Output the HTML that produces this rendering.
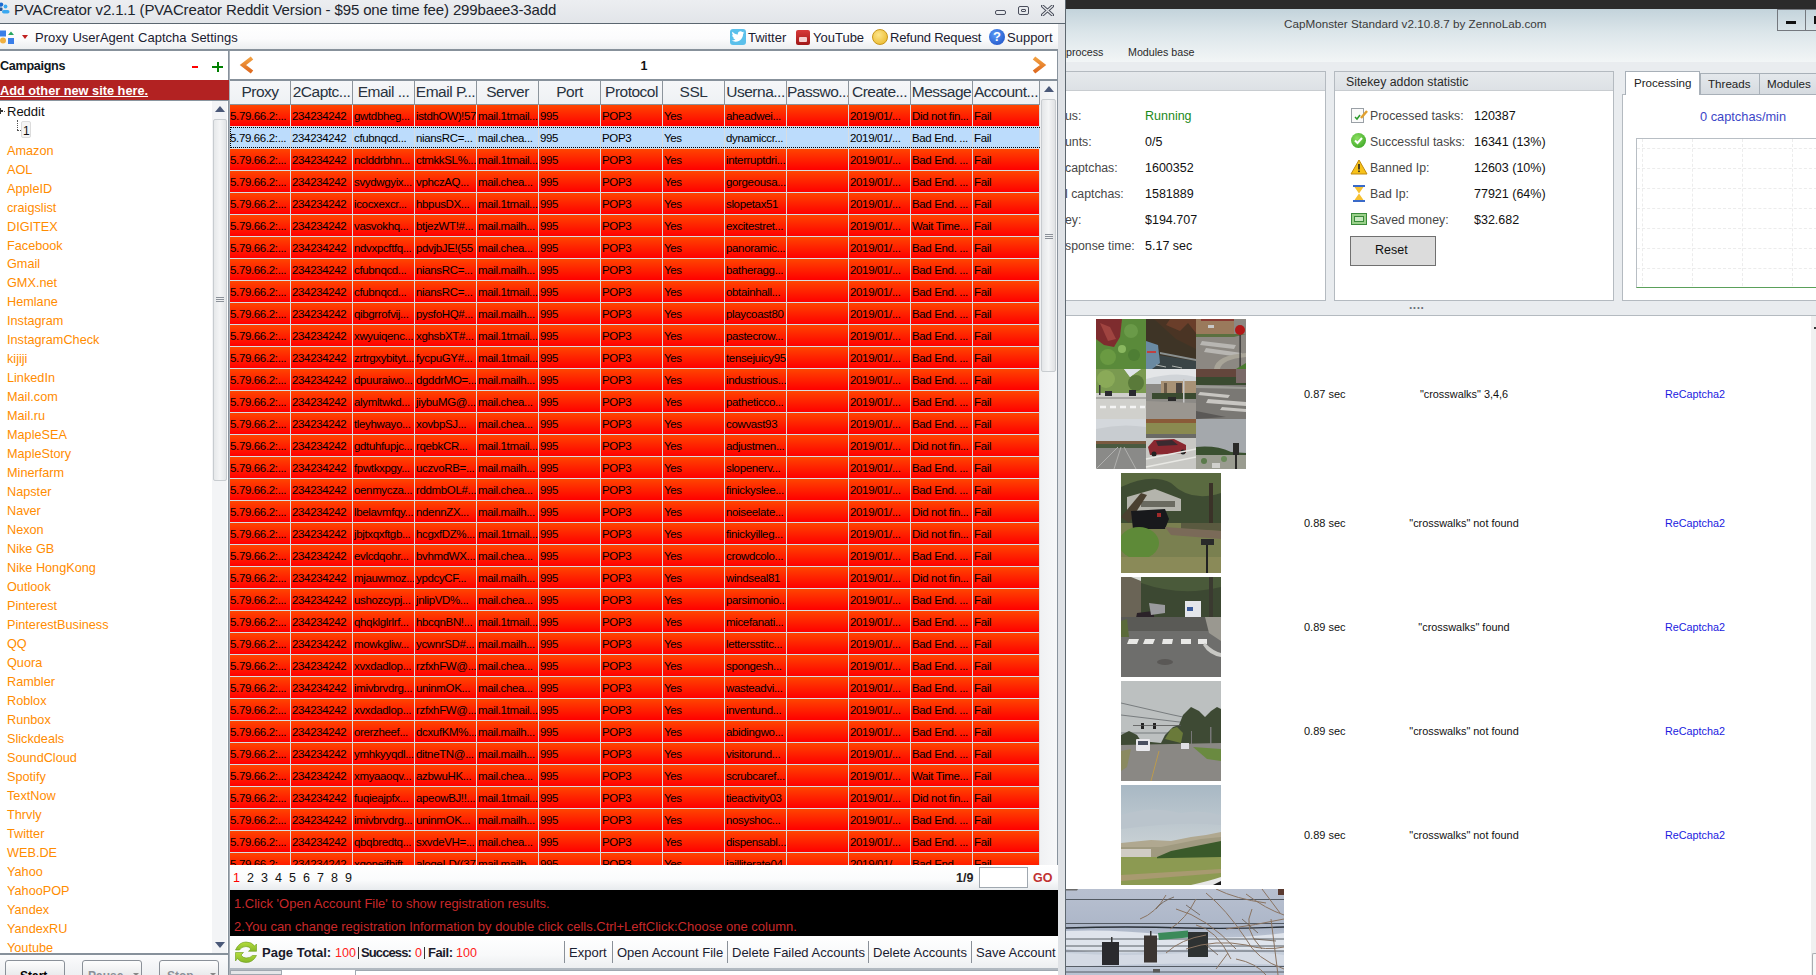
<!DOCTYPE html><html><head><meta charset="utf-8"><style>
*{margin:0;padding:0;box-sizing:border-box}
html,body{width:1816px;height:975px;overflow:hidden;background:#fff;font-family:"Liberation Sans",sans-serif;color:#000}
.a{position:absolute}
.t{position:absolute;white-space:pre;line-height:1}
#lw{position:absolute;left:0;top:0;width:1066px;height:975px;overflow:hidden;background:#fff}
#rw{position:absolute;left:1066px;top:0;width:750px;height:975px;overflow:hidden;background:#fff}
.row{position:absolute;left:230px;width:810px;height:21px;background:linear-gradient(#ff4500,#ff0000)}
.cell{position:absolute;top:0;height:21px;font-size:11.5px;line-height:22px;white-space:pre;overflow:hidden;color:#000;letter-spacing:-0.35px}
.vl{position:absolute;width:1px;background:#d8dce0}
.hd{position:absolute;top:0;height:23px;font-size:15.5px;line-height:22px;text-align:center;color:#28323e;white-space:pre;overflow:hidden;letter-spacing:-0.5px}
.camp{position:absolute;left:7px;font-size:12.7px;color:#ff8c00;white-space:pre;line-height:1}
.lbl{position:absolute;font-size:12.3px;color:#474747;white-space:pre;line-height:1}
.val{position:absolute;font-size:12.5px;color:#111;white-space:pre;line-height:1}
</style></head><body>
<div id="lw">
<div class="a" style="left:0;top:0;width:1066px;height:23px;background:linear-gradient(#eceef1,#e2e5e9)"></div>
<div class="a" style="left:0;top:23px;width:1066px;height:1px;background:#5b6670"></div>
<svg class="a" style="left:0;top:2px" width="12" height="12" viewBox="0 0 12 12"><circle cx="1.2" cy="2.6" r="2.1" fill="#1a6ad0"/><rect x="-1" y="5.5" width="3.5" height="3.5" rx="1" fill="#2a5a9a"/><circle cx="5.5" cy="4.5" r="1.9" fill="#3aa8f0"/><rect x="2" y="8" width="7.5" height="3.6" rx="1.8" fill="#3aa8f0"/></svg>
<div class="t" style="left:14px;top:2px;font-size:15px;letter-spacing:-0.14px;color:#20242c">PVACreator v2.1.1 (PVACreator Reddit Version - $95 one time fee) 299baee3-3add</div>
<div class="a" style="left:995px;top:10px;width:11px;height:5px;border:1.6px solid #4a4e5c;border-radius:2px"></div>
<div class="a" style="left:1018px;top:6px;width:11px;height:9px;border:1.6px solid #4a4e5c;border-radius:2px"></div>
<div class="a" style="left:1021px;top:9px;width:5px;height:3px;border:1.3px solid #4a4e5c;border-radius:1px"></div>
<svg class="a" style="left:1041px;top:5px" width="13" height="11" viewBox="0 0 13 11"><path d="M1.5 1 L11.5 10 M11.5 1 L1.5 10" stroke="#4a4e5c" stroke-width="3.2" stroke-linecap="round"/><path d="M1.5 1 L11.5 10 M11.5 1 L1.5 10" stroke="#e8eaed" stroke-width="1.2" stroke-linecap="round"/></svg>
<div class="a" style="left:0;top:24px;width:1058px;height:25px;background:linear-gradient(#ffffff 0%,#fbfbfc 60%,#eceef0 100%)"></div>
<div class="a" style="left:0;top:49px;width:1058px;height:2px;background:#87919b"></div>
<svg class="a" style="left:0;top:29px" width="15" height="16" viewBox="0 0 15 16"><rect x="0" y="1.5" width="6" height="6" fill="#3a7ee8"/><path d="M8 6 L11 2.5 L14 6 Z" fill="#27a560"/><circle cx="3" cy="11.5" r="3" fill="#f0b040"/><rect x="8" y="9" width="6" height="6" fill="#3a7ee8"/></svg>
<svg class="a" style="left:22px;top:35px" width="6" height="4" viewBox="0 0 6 4"><path d="M0 0 H6 L3 4 Z" fill="#c02020"/></svg>
<div class="t" style="left:35px;top:31px;font-size:13px;color:#1a2030;word-spacing:0.6px">Proxy UserAgent Captcha Settings</div>
<div class="a" style="left:730px;top:29px;width:16px;height:16px;border-radius:3px;background:#5bc0eb"></div>
<svg class="a" style="left:731px;top:31px" width="14" height="12" viewBox="0 0 24 20"><path d="M23 2.3c-.8.4-1.7.6-2.6.7.9-.6 1.6-1.4 2-2.5-.9.5-1.8.9-2.9 1.1C18.6.7 17.4.2 16.2.2c-2.5 0-4.5 2-4.5 4.5 0 .4 0 .7.1 1C8 5.5 4.7 3.7 2.5 1 2.1 1.7 1.9 2.4 1.9 3.2c0 1.6.8 2.9 2 3.8-.7 0-1.4-.2-2-.6v.1c0 2.2 1.6 4 3.6 4.4-.4.1-.8.2-1.2.2-.3 0-.6 0-.8-.1.6 1.8 2.2 3.1 4.2 3.1-1.5 1.2-3.5 1.9-5.6 1.9H1c2 1.3 4.4 2 6.9 2 8.3 0 12.8-6.9 12.8-12.8v-.6c.9-.6 1.6-1.4 2.3-2.3z" fill="#fff"/></svg>
<div class="t" style="left:748px;top:31px;font-size:13px;color:#1a2030">Twitter</div>
<div class="a" style="left:796px;top:30px;width:14px;height:15px;border-radius:2px;background:linear-gradient(#d83a3a,#a01818)"></div>
<div class="a" style="left:799px;top:37px;width:8px;height:5px;border-radius:1px;background:#f4d0d0"></div>
<div class="t" style="left:813px;top:31px;font-size:13px;color:#1a2030">YouTube</div>
<div class="a" style="left:872px;top:29px;width:16px;height:16px;border-radius:8px;background:radial-gradient(circle at 40% 35%,#fde58a,#e8b420);border:1px solid #c8961a"></div>
<div class="t" style="left:890px;top:31px;font-size:13px;color:#1a2030;letter-spacing:-0.2px">Refund Request</div>
<div class="a" style="left:989px;top:29px;width:16px;height:16px;border-radius:8px;background:radial-gradient(circle at 40% 35%,#5a9cf8,#1848c0)"></div>
<div class="t" style="left:993px;top:30px;font-size:13px;font-weight:700;color:#fff">?</div>
<div class="t" style="left:1007px;top:31px;font-size:13px;color:#1a2030">Support</div>
<div class="a" style="left:1058px;top:24px;width:7px;height:951px;background:#dfe2e6"></div>
<div class="a" style="left:1057px;top:51px;width:1px;height:924px;background:#8a949e"></div>
<div class="a" style="left:1065px;top:0;width:1px;height:975px;background:#5e6870"></div>
<div class="t" style="left:0;top:60px;font-size:12.6px;font-weight:700;color:#101820;letter-spacing:-0.3px">Campaigns</div>
<div class="a" style="left:192px;top:66px;width:6px;height:2px;background:#ff0000"></div>
<div class="a" style="left:212px;top:66px;width:11px;height:2px;background:#008000"></div>
<div class="a" style="left:216.5px;top:62px;width:2px;height:10px;background:#008000"></div>
<div class="a" style="left:0;top:80px;width:229px;height:20px;background:#b22222;z-index:2"></div>
<div class="t" style="left:0;top:85px;font-size:12.75px;font-weight:700;color:#fff;text-decoration:underline;z-index:3">Add other new site here.</div>
<div class="a" style="left:0;top:108px;width:1px;height:6px;background:#333"></div>
<div class="a" style="left:1px;top:110px;width:2px;height:2px;background:#333"></div>
<div class="a" style="left:4px;top:111px;width:1px;height:1px;background:#555"></div>
<div class="t" style="left:7px;top:105px;font-size:13px;color:#101010">Reddit</div>
<div class="a" style="left:17px;top:120px;width:0;height:10px;border-left:1px dotted #555"></div>
<div class="a" style="left:17px;top:130px;width:4px;height:0;border-top:1px dotted #555"></div>
<div class="a" style="left:21px;top:121px;width:10px;height:17px;background:#f4f4f4;border:1px solid #dcdcdc;border-radius:2px"></div>
<div class="t" style="left:23px;top:125px;font-size:12px;color:#101010">1</div>
<div class="camp" style="top:144.60px">Amazon</div>
<div class="camp" style="top:163.58px">AOL</div>
<div class="camp" style="top:182.56px">AppleID</div>
<div class="camp" style="top:201.54px">craigslist</div>
<div class="camp" style="top:220.52px">DIGITEX</div>
<div class="camp" style="top:239.50px">Facebook</div>
<div class="camp" style="top:258.48px">Gmail</div>
<div class="camp" style="top:277.46px">GMX.net</div>
<div class="camp" style="top:296.44px">Hemlane</div>
<div class="camp" style="top:315.42px">Instagram</div>
<div class="camp" style="top:334.40px">InstagramCheck</div>
<div class="camp" style="top:353.38px">kijiji</div>
<div class="camp" style="top:372.36px">LinkedIn</div>
<div class="camp" style="top:391.34px">Mail.com</div>
<div class="camp" style="top:410.32px">Mail.ru</div>
<div class="camp" style="top:429.30px">MapleSEA</div>
<div class="camp" style="top:448.28px">MapleStory</div>
<div class="camp" style="top:467.26px">Minerfarm</div>
<div class="camp" style="top:486.24px">Napster</div>
<div class="camp" style="top:505.22px">Naver</div>
<div class="camp" style="top:524.20px">Nexon</div>
<div class="camp" style="top:543.18px">Nike GB</div>
<div class="camp" style="top:562.16px">Nike HongKong</div>
<div class="camp" style="top:581.14px">Outlook</div>
<div class="camp" style="top:600.12px">Pinterest</div>
<div class="camp" style="top:619.10px">PinterestBusiness</div>
<div class="camp" style="top:638.08px">QQ</div>
<div class="camp" style="top:657.06px">Quora</div>
<div class="camp" style="top:676.04px">Rambler</div>
<div class="camp" style="top:695.02px">Roblox</div>
<div class="camp" style="top:714.00px">Runbox</div>
<div class="camp" style="top:732.98px">Slickdeals</div>
<div class="camp" style="top:751.96px">SoundCloud</div>
<div class="camp" style="top:770.94px">Spotify</div>
<div class="camp" style="top:789.92px">TextNow</div>
<div class="camp" style="top:808.90px">Thrvly</div>
<div class="camp" style="top:827.88px">Twitter</div>
<div class="camp" style="top:846.86px">WEB.DE</div>
<div class="camp" style="top:865.84px">Yahoo</div>
<div class="camp" style="top:884.82px">YahooPOP</div>
<div class="camp" style="top:903.80px">Yandex</div>
<div class="camp" style="top:922.78px">YandexRU</div>
<div class="camp" style="top:941.76px">Youtube</div>
<div class="a" style="left:212px;top:101px;width:15px;height:853px;background:#f3f4f6"></div>
<svg class="a" style="left:215px;top:106px" width="10" height="6" viewBox="0 0 10 6"><path d="M0 6 L5 0 L10 6Z" fill="#4a5878"/></svg>
<div class="a" style="left:213px;top:119px;width:14px;height:362px;background:linear-gradient(90deg,#e6e8ea,#f4f5f6 50%,#e2e4e6);border:1px solid #c8ccd0;border-radius:2px"></div>
<div class="a" style="left:216px;top:297px;width:8px;height:5px;border-top:1px solid #8a9098;border-bottom:1px solid #8a9098"></div>
<div class="a" style="left:216px;top:299px;width:8px;height:1px;background:#8a9098"></div>
<svg class="a" style="left:215px;top:942px" width="10" height="6" viewBox="0 0 10 6"><path d="M0 0 L5 6 L10 0Z" fill="#4a5878"/></svg>
<div class="a" style="left:0;top:953px;width:228px;height:2px;background:#87919b"></div>
<div class="a" style="left:0;top:955px;width:228px;height:20px;background:linear-gradient(#fbfbfc,#eef0f2)"></div>
<div class="a" style="left:5px;top:960px;width:60px;height:20px;border:1px solid #8a9098;border-radius:3px;background:linear-gradient(#fdfdfd,#e4e6e8)"></div>
<div class="t" style="left:20px;top:970px;font-size:12px;font-weight:700;color:#000">Start</div>
<div class="a" style="left:82px;top:960px;width:60px;height:20px;border:1px solid #8a9098;border-radius:3px;background:linear-gradient(#fdfdfd,#e4e6e8)"></div>
<div class="t" style="left:88px;top:970px;font-size:12px;font-weight:700;color:#8a9098">Pause</div>
<svg class="a" style="left:133px;top:973px" width="6" height="3"><path d="M0 0H6L3 3Z" fill="#888"/></svg>
<div class="a" style="left:159px;top:960px;width:60px;height:20px;border:1px solid #8a9098;border-radius:3px;background:linear-gradient(#fdfdfd,#e4e6e8)"></div>
<div class="t" style="left:167px;top:970px;font-size:12px;font-weight:700;color:#8a9098">Stop</div>
<svg class="a" style="left:210px;top:973px" width="6" height="3"><path d="M0 0H6L3 3Z" fill="#888"/></svg>
<div class="a" style="left:228px;top:51px;width:1px;height:924px;background:#87919b"></div>
<div class="a" style="left:229px;top:51px;width:1px;height:924px;background:#aab2ba"></div>
<div class="a" style="left:0;top:100px;width:228px;height:1px;background:#8a96a0"></div>
<svg class="a" style="left:238px;top:55px" width="18" height="20" viewBox="0 0 18 20"><defs><linearGradient id="og" x1="0" y1="0" x2="0" y2="1"><stop offset="0" stop-color="#f2a040"/><stop offset="1" stop-color="#de6a20"/></linearGradient></defs><path d="M14 3 L5 10 L14 17" fill="none" stroke="url(#og)" stroke-width="4" stroke-linejoin="miter"/></svg>
<svg class="a" style="left:1030px;top:55px" width="18" height="20" viewBox="0 0 18 20"><path d="M4 3 L13 10 L4 17" fill="none" stroke="url(#og)" stroke-width="4" stroke-linejoin="miter"/></svg>
<div class="t" style="left:640.5px;top:60px;font-size:12.5px;font-weight:700;color:#111">1</div>
<div class="a" style="left:230px;top:79px;width:828px;height:2px;background:#87919b"></div>
<div class="a" style="left:230px;top:81px;width:810px;height:23px;background:linear-gradient(#f6f7f9,#eef1f4)"></div>
<div class="hd" style="left:230px;width:60px;top:81px">Proxy</div>
<div class="a" style="left:290px;top:81px;width:1px;height:23px;background:#8c949c"></div>
<div class="hd" style="left:291px;width:61px;top:81px">2Captc...</div>
<div class="a" style="left:352px;top:81px;width:1px;height:23px;background:#8c949c"></div>
<div class="hd" style="left:353px;width:61px;top:81px">Email ...</div>
<div class="a" style="left:414px;top:81px;width:1px;height:23px;background:#8c949c"></div>
<div class="hd" style="left:415px;width:61px;top:81px">Email P...</div>
<div class="a" style="left:476px;top:81px;width:1px;height:23px;background:#8c949c"></div>
<div class="hd" style="left:477px;width:61px;top:81px">Server</div>
<div class="a" style="left:538px;top:81px;width:1px;height:23px;background:#8c949c"></div>
<div class="hd" style="left:539px;width:61px;top:81px">Port</div>
<div class="a" style="left:600px;top:81px;width:1px;height:23px;background:#8c949c"></div>
<div class="hd" style="left:601px;width:61px;top:81px">Protocol</div>
<div class="a" style="left:662px;top:81px;width:1px;height:23px;background:#8c949c"></div>
<div class="hd" style="left:663px;width:61px;top:81px">SSL</div>
<div class="a" style="left:724px;top:81px;width:1px;height:23px;background:#8c949c"></div>
<div class="hd" style="left:725px;width:61px;top:81px">Userna...</div>
<div class="a" style="left:786px;top:81px;width:1px;height:23px;background:#8c949c"></div>
<div class="hd" style="left:787px;width:61px;top:81px">Passwo...</div>
<div class="a" style="left:848px;top:81px;width:1px;height:23px;background:#8c949c"></div>
<div class="hd" style="left:849px;width:61px;top:81px">Create...</div>
<div class="a" style="left:910px;top:81px;width:1px;height:23px;background:#8c949c"></div>
<div class="hd" style="left:911px;width:61px;top:81px">Message</div>
<div class="a" style="left:972px;top:81px;width:1px;height:23px;background:#8c949c"></div>
<div class="hd" style="left:973px;width:66px;top:81px">Account...</div>
<div class="a" style="left:1039px;top:81px;width:1px;height:23px;background:#8c949c"></div>
<div class="a" style="left:230px;top:104px;width:810px;height:1px;background:#8a949c"></div>
<div class="row" style="top:105px;">
<div class="cell" style="left:0px;width:59px">5.79.66.2:...</div>
<div class="cell" style="left:62px;width:60px">234234242</div>
<div class="cell" style="left:124px;width:60px">gwtdbheg...</div>
<div class="cell" style="left:186px;width:60px">istdhOW)!57</div>
<div class="cell" style="left:248px;width:60px">mail.1tmail...</div>
<div class="cell" style="left:310px;width:60px">995</div>
<div class="cell" style="left:372px;width:60px">POP3</div>
<div class="cell" style="left:434px;width:60px">Yes</div>
<div class="cell" style="left:496px;width:60px">aheadwei...</div>
<div class="cell" style="left:558px;width:60px"></div>
<div class="cell" style="left:620px;width:60px">2019/01/...</div>
<div class="cell" style="left:682px;width:60px">Did not fin...</div>
<div class="cell" style="left:744px;width:65px">Fail</div>
</div>
<div class="a" style="left:230px;top:126px;width:810px;height:1px;background:#d8dce0"></div>
<div class="row" style="top:127px;background:#bcdcfc">
<div class="cell" style="left:0px;width:59px">5.79.66.2:...</div>
<div class="cell" style="left:62px;width:60px">234234242</div>
<div class="cell" style="left:124px;width:60px">cfubnqcd...</div>
<div class="cell" style="left:186px;width:60px">niansRC=...</div>
<div class="cell" style="left:248px;width:60px">mail.chea...</div>
<div class="cell" style="left:310px;width:60px">995</div>
<div class="cell" style="left:372px;width:60px">POP3</div>
<div class="cell" style="left:434px;width:60px">Yes</div>
<div class="cell" style="left:496px;width:60px">dynamiccr...</div>
<div class="cell" style="left:558px;width:60px"></div>
<div class="cell" style="left:620px;width:60px">2019/01/...</div>
<div class="cell" style="left:682px;width:60px">Bad End. ...</div>
<div class="cell" style="left:744px;width:65px">Fail</div>
</div>
<div class="a" style="left:230px;top:148px;width:810px;height:1px;background:#d8dce0"></div>
<div class="row" style="top:149px;">
<div class="cell" style="left:0px;width:59px">5.79.66.2:...</div>
<div class="cell" style="left:62px;width:60px">234234242</div>
<div class="cell" style="left:124px;width:60px">nclddrbhn...</div>
<div class="cell" style="left:186px;width:60px">ctmkkSL%...</div>
<div class="cell" style="left:248px;width:60px">mail.1tmail...</div>
<div class="cell" style="left:310px;width:60px">995</div>
<div class="cell" style="left:372px;width:60px">POP3</div>
<div class="cell" style="left:434px;width:60px">Yes</div>
<div class="cell" style="left:496px;width:60px">interruptdri...</div>
<div class="cell" style="left:558px;width:60px"></div>
<div class="cell" style="left:620px;width:60px">2019/01/...</div>
<div class="cell" style="left:682px;width:60px">Bad End. ...</div>
<div class="cell" style="left:744px;width:65px">Fail</div>
</div>
<div class="a" style="left:230px;top:170px;width:810px;height:1px;background:#d8dce0"></div>
<div class="row" style="top:171px;">
<div class="cell" style="left:0px;width:59px">5.79.66.2:...</div>
<div class="cell" style="left:62px;width:60px">234234242</div>
<div class="cell" style="left:124px;width:60px">svydwgyix...</div>
<div class="cell" style="left:186px;width:60px">vphczAQ...</div>
<div class="cell" style="left:248px;width:60px">mail.chea...</div>
<div class="cell" style="left:310px;width:60px">995</div>
<div class="cell" style="left:372px;width:60px">POP3</div>
<div class="cell" style="left:434px;width:60px">Yes</div>
<div class="cell" style="left:496px;width:60px">gorgeousa...</div>
<div class="cell" style="left:558px;width:60px"></div>
<div class="cell" style="left:620px;width:60px">2019/01/...</div>
<div class="cell" style="left:682px;width:60px">Bad End. ...</div>
<div class="cell" style="left:744px;width:65px">Fail</div>
</div>
<div class="a" style="left:230px;top:192px;width:810px;height:1px;background:#d8dce0"></div>
<div class="row" style="top:193px;">
<div class="cell" style="left:0px;width:59px">5.79.66.2:...</div>
<div class="cell" style="left:62px;width:60px">234234242</div>
<div class="cell" style="left:124px;width:60px">icocxexcr...</div>
<div class="cell" style="left:186px;width:60px">hbpusDX...</div>
<div class="cell" style="left:248px;width:60px">mail.1tmail...</div>
<div class="cell" style="left:310px;width:60px">995</div>
<div class="cell" style="left:372px;width:60px">POP3</div>
<div class="cell" style="left:434px;width:60px">Yes</div>
<div class="cell" style="left:496px;width:60px">slopetax51</div>
<div class="cell" style="left:558px;width:60px"></div>
<div class="cell" style="left:620px;width:60px">2019/01/...</div>
<div class="cell" style="left:682px;width:60px">Bad End. ...</div>
<div class="cell" style="left:744px;width:65px">Fail</div>
</div>
<div class="a" style="left:230px;top:214px;width:810px;height:1px;background:#d8dce0"></div>
<div class="row" style="top:215px;">
<div class="cell" style="left:0px;width:59px">5.79.66.2:...</div>
<div class="cell" style="left:62px;width:60px">234234242</div>
<div class="cell" style="left:124px;width:60px">vasvokhq...</div>
<div class="cell" style="left:186px;width:60px">btjezWT!#...</div>
<div class="cell" style="left:248px;width:60px">mail.mailh...</div>
<div class="cell" style="left:310px;width:60px">995</div>
<div class="cell" style="left:372px;width:60px">POP3</div>
<div class="cell" style="left:434px;width:60px">Yes</div>
<div class="cell" style="left:496px;width:60px">excitestret...</div>
<div class="cell" style="left:558px;width:60px"></div>
<div class="cell" style="left:620px;width:60px">2019/01/...</div>
<div class="cell" style="left:682px;width:60px">Wait Time...</div>
<div class="cell" style="left:744px;width:65px">Fail</div>
</div>
<div class="a" style="left:230px;top:236px;width:810px;height:1px;background:#d8dce0"></div>
<div class="row" style="top:237px;">
<div class="cell" style="left:0px;width:59px">5.79.66.2:...</div>
<div class="cell" style="left:62px;width:60px">234234242</div>
<div class="cell" style="left:124px;width:60px">ndvxpcftfq...</div>
<div class="cell" style="left:186px;width:60px">pdvjbJE!(55</div>
<div class="cell" style="left:248px;width:60px">mail.chea...</div>
<div class="cell" style="left:310px;width:60px">995</div>
<div class="cell" style="left:372px;width:60px">POP3</div>
<div class="cell" style="left:434px;width:60px">Yes</div>
<div class="cell" style="left:496px;width:60px">panoramic...</div>
<div class="cell" style="left:558px;width:60px"></div>
<div class="cell" style="left:620px;width:60px">2019/01/...</div>
<div class="cell" style="left:682px;width:60px">Bad End. ...</div>
<div class="cell" style="left:744px;width:65px">Fail</div>
</div>
<div class="a" style="left:230px;top:258px;width:810px;height:1px;background:#d8dce0"></div>
<div class="row" style="top:259px;">
<div class="cell" style="left:0px;width:59px">5.79.66.2:...</div>
<div class="cell" style="left:62px;width:60px">234234242</div>
<div class="cell" style="left:124px;width:60px">cfubnqcd...</div>
<div class="cell" style="left:186px;width:60px">niansRC=...</div>
<div class="cell" style="left:248px;width:60px">mail.mailh...</div>
<div class="cell" style="left:310px;width:60px">995</div>
<div class="cell" style="left:372px;width:60px">POP3</div>
<div class="cell" style="left:434px;width:60px">Yes</div>
<div class="cell" style="left:496px;width:60px">batheragg...</div>
<div class="cell" style="left:558px;width:60px"></div>
<div class="cell" style="left:620px;width:60px">2019/01/...</div>
<div class="cell" style="left:682px;width:60px">Bad End. ...</div>
<div class="cell" style="left:744px;width:65px">Fail</div>
</div>
<div class="a" style="left:230px;top:280px;width:810px;height:1px;background:#d8dce0"></div>
<div class="row" style="top:281px;">
<div class="cell" style="left:0px;width:59px">5.79.66.2:...</div>
<div class="cell" style="left:62px;width:60px">234234242</div>
<div class="cell" style="left:124px;width:60px">cfubnqcd...</div>
<div class="cell" style="left:186px;width:60px">niansRC=...</div>
<div class="cell" style="left:248px;width:60px">mail.1tmail...</div>
<div class="cell" style="left:310px;width:60px">995</div>
<div class="cell" style="left:372px;width:60px">POP3</div>
<div class="cell" style="left:434px;width:60px">Yes</div>
<div class="cell" style="left:496px;width:60px">obtainhall...</div>
<div class="cell" style="left:558px;width:60px"></div>
<div class="cell" style="left:620px;width:60px">2019/01/...</div>
<div class="cell" style="left:682px;width:60px">Bad End. ...</div>
<div class="cell" style="left:744px;width:65px">Fail</div>
</div>
<div class="a" style="left:230px;top:302px;width:810px;height:1px;background:#d8dce0"></div>
<div class="row" style="top:303px;">
<div class="cell" style="left:0px;width:59px">5.79.66.2:...</div>
<div class="cell" style="left:62px;width:60px">234234242</div>
<div class="cell" style="left:124px;width:60px">qibgrrofvij...</div>
<div class="cell" style="left:186px;width:60px">pysfoHQ#...</div>
<div class="cell" style="left:248px;width:60px">mail.mailh...</div>
<div class="cell" style="left:310px;width:60px">995</div>
<div class="cell" style="left:372px;width:60px">POP3</div>
<div class="cell" style="left:434px;width:60px">Yes</div>
<div class="cell" style="left:496px;width:60px">playcoast80</div>
<div class="cell" style="left:558px;width:60px"></div>
<div class="cell" style="left:620px;width:60px">2019/01/...</div>
<div class="cell" style="left:682px;width:60px">Bad End. ...</div>
<div class="cell" style="left:744px;width:65px">Fail</div>
</div>
<div class="a" style="left:230px;top:324px;width:810px;height:1px;background:#d8dce0"></div>
<div class="row" style="top:325px;">
<div class="cell" style="left:0px;width:59px">5.79.66.2:...</div>
<div class="cell" style="left:62px;width:60px">234234242</div>
<div class="cell" style="left:124px;width:60px">xwyuiqenc...</div>
<div class="cell" style="left:186px;width:60px">xghsbXT#...</div>
<div class="cell" style="left:248px;width:60px">mail.1tmail...</div>
<div class="cell" style="left:310px;width:60px">995</div>
<div class="cell" style="left:372px;width:60px">POP3</div>
<div class="cell" style="left:434px;width:60px">Yes</div>
<div class="cell" style="left:496px;width:60px">pastecrow...</div>
<div class="cell" style="left:558px;width:60px"></div>
<div class="cell" style="left:620px;width:60px">2019/01/...</div>
<div class="cell" style="left:682px;width:60px">Bad End. ...</div>
<div class="cell" style="left:744px;width:65px">Fail</div>
</div>
<div class="a" style="left:230px;top:346px;width:810px;height:1px;background:#d8dce0"></div>
<div class="row" style="top:347px;">
<div class="cell" style="left:0px;width:59px">5.79.66.2:...</div>
<div class="cell" style="left:62px;width:60px">234234242</div>
<div class="cell" style="left:124px;width:60px">zrtrgxybityt...</div>
<div class="cell" style="left:186px;width:60px">fycpuGY#...</div>
<div class="cell" style="left:248px;width:60px">mail.1tmail...</div>
<div class="cell" style="left:310px;width:60px">995</div>
<div class="cell" style="left:372px;width:60px">POP3</div>
<div class="cell" style="left:434px;width:60px">Yes</div>
<div class="cell" style="left:496px;width:60px">tensejuicy95</div>
<div class="cell" style="left:558px;width:60px"></div>
<div class="cell" style="left:620px;width:60px">2019/01/...</div>
<div class="cell" style="left:682px;width:60px">Bad End. ...</div>
<div class="cell" style="left:744px;width:65px">Fail</div>
</div>
<div class="a" style="left:230px;top:368px;width:810px;height:1px;background:#d8dce0"></div>
<div class="row" style="top:369px;">
<div class="cell" style="left:0px;width:59px">5.79.66.2:...</div>
<div class="cell" style="left:62px;width:60px">234234242</div>
<div class="cell" style="left:124px;width:60px">dpuuraiwo...</div>
<div class="cell" style="left:186px;width:60px">dgddrMO=...</div>
<div class="cell" style="left:248px;width:60px">mail.mailh...</div>
<div class="cell" style="left:310px;width:60px">995</div>
<div class="cell" style="left:372px;width:60px">POP3</div>
<div class="cell" style="left:434px;width:60px">Yes</div>
<div class="cell" style="left:496px;width:60px">industrious...</div>
<div class="cell" style="left:558px;width:60px"></div>
<div class="cell" style="left:620px;width:60px">2019/01/...</div>
<div class="cell" style="left:682px;width:60px">Bad End. ...</div>
<div class="cell" style="left:744px;width:65px">Fail</div>
</div>
<div class="a" style="left:230px;top:390px;width:810px;height:1px;background:#d8dce0"></div>
<div class="row" style="top:391px;">
<div class="cell" style="left:0px;width:59px">5.79.66.2:...</div>
<div class="cell" style="left:62px;width:60px">234234242</div>
<div class="cell" style="left:124px;width:60px">alymltwkd...</div>
<div class="cell" style="left:186px;width:60px">jiybuMG@...</div>
<div class="cell" style="left:248px;width:60px">mail.chea...</div>
<div class="cell" style="left:310px;width:60px">995</div>
<div class="cell" style="left:372px;width:60px">POP3</div>
<div class="cell" style="left:434px;width:60px">Yes</div>
<div class="cell" style="left:496px;width:60px">patheticco...</div>
<div class="cell" style="left:558px;width:60px"></div>
<div class="cell" style="left:620px;width:60px">2019/01/...</div>
<div class="cell" style="left:682px;width:60px">Bad End. ...</div>
<div class="cell" style="left:744px;width:65px">Fail</div>
</div>
<div class="a" style="left:230px;top:412px;width:810px;height:1px;background:#d8dce0"></div>
<div class="row" style="top:413px;">
<div class="cell" style="left:0px;width:59px">5.79.66.2:...</div>
<div class="cell" style="left:62px;width:60px">234234242</div>
<div class="cell" style="left:124px;width:60px">tleyhwayo...</div>
<div class="cell" style="left:186px;width:60px">xovbpSJ...</div>
<div class="cell" style="left:248px;width:60px">mail.chea...</div>
<div class="cell" style="left:310px;width:60px">995</div>
<div class="cell" style="left:372px;width:60px">POP3</div>
<div class="cell" style="left:434px;width:60px">Yes</div>
<div class="cell" style="left:496px;width:60px">cowvast93</div>
<div class="cell" style="left:558px;width:60px"></div>
<div class="cell" style="left:620px;width:60px">2019/01/...</div>
<div class="cell" style="left:682px;width:60px">Bad End. ...</div>
<div class="cell" style="left:744px;width:65px">Fail</div>
</div>
<div class="a" style="left:230px;top:434px;width:810px;height:1px;background:#d8dce0"></div>
<div class="row" style="top:435px;">
<div class="cell" style="left:0px;width:59px">5.79.66.2:...</div>
<div class="cell" style="left:62px;width:60px">234234242</div>
<div class="cell" style="left:124px;width:60px">gdtuhfupjc...</div>
<div class="cell" style="left:186px;width:60px">rqebkCR...</div>
<div class="cell" style="left:248px;width:60px">mail.1tmail...</div>
<div class="cell" style="left:310px;width:60px">995</div>
<div class="cell" style="left:372px;width:60px">POP3</div>
<div class="cell" style="left:434px;width:60px">Yes</div>
<div class="cell" style="left:496px;width:60px">adjustmen...</div>
<div class="cell" style="left:558px;width:60px"></div>
<div class="cell" style="left:620px;width:60px">2019/01/...</div>
<div class="cell" style="left:682px;width:60px">Did not fin...</div>
<div class="cell" style="left:744px;width:65px">Fail</div>
</div>
<div class="a" style="left:230px;top:456px;width:810px;height:1px;background:#d8dce0"></div>
<div class="row" style="top:457px;">
<div class="cell" style="left:0px;width:59px">5.79.66.2:...</div>
<div class="cell" style="left:62px;width:60px">234234242</div>
<div class="cell" style="left:124px;width:60px">fpwtkxpgy...</div>
<div class="cell" style="left:186px;width:60px">uczvoRB=...</div>
<div class="cell" style="left:248px;width:60px">mail.mailh...</div>
<div class="cell" style="left:310px;width:60px">995</div>
<div class="cell" style="left:372px;width:60px">POP3</div>
<div class="cell" style="left:434px;width:60px">Yes</div>
<div class="cell" style="left:496px;width:60px">slopenerv...</div>
<div class="cell" style="left:558px;width:60px"></div>
<div class="cell" style="left:620px;width:60px">2019/01/...</div>
<div class="cell" style="left:682px;width:60px">Bad End. ...</div>
<div class="cell" style="left:744px;width:65px">Fail</div>
</div>
<div class="a" style="left:230px;top:478px;width:810px;height:1px;background:#d8dce0"></div>
<div class="row" style="top:479px;">
<div class="cell" style="left:0px;width:59px">5.79.66.2:...</div>
<div class="cell" style="left:62px;width:60px">234234242</div>
<div class="cell" style="left:124px;width:60px">oenmycza...</div>
<div class="cell" style="left:186px;width:60px">rddmbOL#...</div>
<div class="cell" style="left:248px;width:60px">mail.chea...</div>
<div class="cell" style="left:310px;width:60px">995</div>
<div class="cell" style="left:372px;width:60px">POP3</div>
<div class="cell" style="left:434px;width:60px">Yes</div>
<div class="cell" style="left:496px;width:60px">finickyslee...</div>
<div class="cell" style="left:558px;width:60px"></div>
<div class="cell" style="left:620px;width:60px">2019/01/...</div>
<div class="cell" style="left:682px;width:60px">Bad End. ...</div>
<div class="cell" style="left:744px;width:65px">Fail</div>
</div>
<div class="a" style="left:230px;top:500px;width:810px;height:1px;background:#d8dce0"></div>
<div class="row" style="top:501px;">
<div class="cell" style="left:0px;width:59px">5.79.66.2:...</div>
<div class="cell" style="left:62px;width:60px">234234242</div>
<div class="cell" style="left:124px;width:60px">lbelavmfqy...</div>
<div class="cell" style="left:186px;width:60px">ndennZX...</div>
<div class="cell" style="left:248px;width:60px">mail.mailh...</div>
<div class="cell" style="left:310px;width:60px">995</div>
<div class="cell" style="left:372px;width:60px">POP3</div>
<div class="cell" style="left:434px;width:60px">Yes</div>
<div class="cell" style="left:496px;width:60px">noiseelate...</div>
<div class="cell" style="left:558px;width:60px"></div>
<div class="cell" style="left:620px;width:60px">2019/01/...</div>
<div class="cell" style="left:682px;width:60px">Did not fin...</div>
<div class="cell" style="left:744px;width:65px">Fail</div>
</div>
<div class="a" style="left:230px;top:522px;width:810px;height:1px;background:#d8dce0"></div>
<div class="row" style="top:523px;">
<div class="cell" style="left:0px;width:59px">5.79.66.2:...</div>
<div class="cell" style="left:62px;width:60px">234234242</div>
<div class="cell" style="left:124px;width:60px">jbjtxqxftgb...</div>
<div class="cell" style="left:186px;width:60px">hcgxfDZ%...</div>
<div class="cell" style="left:248px;width:60px">mail.1tmail...</div>
<div class="cell" style="left:310px;width:60px">995</div>
<div class="cell" style="left:372px;width:60px">POP3</div>
<div class="cell" style="left:434px;width:60px">Yes</div>
<div class="cell" style="left:496px;width:60px">finickyilleg...</div>
<div class="cell" style="left:558px;width:60px"></div>
<div class="cell" style="left:620px;width:60px">2019/01/...</div>
<div class="cell" style="left:682px;width:60px">Did not fin...</div>
<div class="cell" style="left:744px;width:65px">Fail</div>
</div>
<div class="a" style="left:230px;top:544px;width:810px;height:1px;background:#d8dce0"></div>
<div class="row" style="top:545px;">
<div class="cell" style="left:0px;width:59px">5.79.66.2:...</div>
<div class="cell" style="left:62px;width:60px">234234242</div>
<div class="cell" style="left:124px;width:60px">evlcdqohr...</div>
<div class="cell" style="left:186px;width:60px">bvhmdWX...</div>
<div class="cell" style="left:248px;width:60px">mail.chea...</div>
<div class="cell" style="left:310px;width:60px">995</div>
<div class="cell" style="left:372px;width:60px">POP3</div>
<div class="cell" style="left:434px;width:60px">Yes</div>
<div class="cell" style="left:496px;width:60px">crowdcolo...</div>
<div class="cell" style="left:558px;width:60px"></div>
<div class="cell" style="left:620px;width:60px">2019/01/...</div>
<div class="cell" style="left:682px;width:60px">Bad End. ...</div>
<div class="cell" style="left:744px;width:65px">Fail</div>
</div>
<div class="a" style="left:230px;top:566px;width:810px;height:1px;background:#d8dce0"></div>
<div class="row" style="top:567px;">
<div class="cell" style="left:0px;width:59px">5.79.66.2:...</div>
<div class="cell" style="left:62px;width:60px">234234242</div>
<div class="cell" style="left:124px;width:60px">mjauwmoz...</div>
<div class="cell" style="left:186px;width:60px">ypdcyCF...</div>
<div class="cell" style="left:248px;width:60px">mail.mailh...</div>
<div class="cell" style="left:310px;width:60px">995</div>
<div class="cell" style="left:372px;width:60px">POP3</div>
<div class="cell" style="left:434px;width:60px">Yes</div>
<div class="cell" style="left:496px;width:60px">windseal81</div>
<div class="cell" style="left:558px;width:60px"></div>
<div class="cell" style="left:620px;width:60px">2019/01/...</div>
<div class="cell" style="left:682px;width:60px">Did not fin...</div>
<div class="cell" style="left:744px;width:65px">Fail</div>
</div>
<div class="a" style="left:230px;top:588px;width:810px;height:1px;background:#d8dce0"></div>
<div class="row" style="top:589px;">
<div class="cell" style="left:0px;width:59px">5.79.66.2:...</div>
<div class="cell" style="left:62px;width:60px">234234242</div>
<div class="cell" style="left:124px;width:60px">ushozcypj...</div>
<div class="cell" style="left:186px;width:60px">jnlipVD%...</div>
<div class="cell" style="left:248px;width:60px">mail.chea...</div>
<div class="cell" style="left:310px;width:60px">995</div>
<div class="cell" style="left:372px;width:60px">POP3</div>
<div class="cell" style="left:434px;width:60px">Yes</div>
<div class="cell" style="left:496px;width:60px">parsimonio...</div>
<div class="cell" style="left:558px;width:60px"></div>
<div class="cell" style="left:620px;width:60px">2019/01/...</div>
<div class="cell" style="left:682px;width:60px">Bad End. ...</div>
<div class="cell" style="left:744px;width:65px">Fail</div>
</div>
<div class="a" style="left:230px;top:610px;width:810px;height:1px;background:#d8dce0"></div>
<div class="row" style="top:611px;">
<div class="cell" style="left:0px;width:59px">5.79.66.2:...</div>
<div class="cell" style="left:62px;width:60px">234234242</div>
<div class="cell" style="left:124px;width:60px">qhqklglrlrf...</div>
<div class="cell" style="left:186px;width:60px">hbcqnBN!...</div>
<div class="cell" style="left:248px;width:60px">mail.1tmail...</div>
<div class="cell" style="left:310px;width:60px">995</div>
<div class="cell" style="left:372px;width:60px">POP3</div>
<div class="cell" style="left:434px;width:60px">Yes</div>
<div class="cell" style="left:496px;width:60px">micefanati...</div>
<div class="cell" style="left:558px;width:60px"></div>
<div class="cell" style="left:620px;width:60px">2019/01/...</div>
<div class="cell" style="left:682px;width:60px">Bad End. ...</div>
<div class="cell" style="left:744px;width:65px">Fail</div>
</div>
<div class="a" style="left:230px;top:632px;width:810px;height:1px;background:#d8dce0"></div>
<div class="row" style="top:633px;">
<div class="cell" style="left:0px;width:59px">5.79.66.2:...</div>
<div class="cell" style="left:62px;width:60px">234234242</div>
<div class="cell" style="left:124px;width:60px">mowkgliw...</div>
<div class="cell" style="left:186px;width:60px">ycwnrSD#...</div>
<div class="cell" style="left:248px;width:60px">mail.mailh...</div>
<div class="cell" style="left:310px;width:60px">995</div>
<div class="cell" style="left:372px;width:60px">POP3</div>
<div class="cell" style="left:434px;width:60px">Yes</div>
<div class="cell" style="left:496px;width:60px">lettersstitc...</div>
<div class="cell" style="left:558px;width:60px"></div>
<div class="cell" style="left:620px;width:60px">2019/01/...</div>
<div class="cell" style="left:682px;width:60px">Bad End. ...</div>
<div class="cell" style="left:744px;width:65px">Fail</div>
</div>
<div class="a" style="left:230px;top:654px;width:810px;height:1px;background:#d8dce0"></div>
<div class="row" style="top:655px;">
<div class="cell" style="left:0px;width:59px">5.79.66.2:...</div>
<div class="cell" style="left:62px;width:60px">234234242</div>
<div class="cell" style="left:124px;width:60px">xvxdadlop...</div>
<div class="cell" style="left:186px;width:60px">rzfxhFW@...</div>
<div class="cell" style="left:248px;width:60px">mail.chea...</div>
<div class="cell" style="left:310px;width:60px">995</div>
<div class="cell" style="left:372px;width:60px">POP3</div>
<div class="cell" style="left:434px;width:60px">Yes</div>
<div class="cell" style="left:496px;width:60px">spongesh...</div>
<div class="cell" style="left:558px;width:60px"></div>
<div class="cell" style="left:620px;width:60px">2019/01/...</div>
<div class="cell" style="left:682px;width:60px">Bad End. ...</div>
<div class="cell" style="left:744px;width:65px">Fail</div>
</div>
<div class="a" style="left:230px;top:676px;width:810px;height:1px;background:#d8dce0"></div>
<div class="row" style="top:677px;">
<div class="cell" style="left:0px;width:59px">5.79.66.2:...</div>
<div class="cell" style="left:62px;width:60px">234234242</div>
<div class="cell" style="left:124px;width:60px">imivbrvdrg...</div>
<div class="cell" style="left:186px;width:60px">uninmOK...</div>
<div class="cell" style="left:248px;width:60px">mail.chea...</div>
<div class="cell" style="left:310px;width:60px">995</div>
<div class="cell" style="left:372px;width:60px">POP3</div>
<div class="cell" style="left:434px;width:60px">Yes</div>
<div class="cell" style="left:496px;width:60px">wasteadvi...</div>
<div class="cell" style="left:558px;width:60px"></div>
<div class="cell" style="left:620px;width:60px">2019/01/...</div>
<div class="cell" style="left:682px;width:60px">Bad End. ...</div>
<div class="cell" style="left:744px;width:65px">Fail</div>
</div>
<div class="a" style="left:230px;top:698px;width:810px;height:1px;background:#d8dce0"></div>
<div class="row" style="top:699px;">
<div class="cell" style="left:0px;width:59px">5.79.66.2:...</div>
<div class="cell" style="left:62px;width:60px">234234242</div>
<div class="cell" style="left:124px;width:60px">xvxdadlop...</div>
<div class="cell" style="left:186px;width:60px">rzfxhFW@...</div>
<div class="cell" style="left:248px;width:60px">mail.1tmail...</div>
<div class="cell" style="left:310px;width:60px">995</div>
<div class="cell" style="left:372px;width:60px">POP3</div>
<div class="cell" style="left:434px;width:60px">Yes</div>
<div class="cell" style="left:496px;width:60px">inventund...</div>
<div class="cell" style="left:558px;width:60px"></div>
<div class="cell" style="left:620px;width:60px">2019/01/...</div>
<div class="cell" style="left:682px;width:60px">Bad End. ...</div>
<div class="cell" style="left:744px;width:65px">Fail</div>
</div>
<div class="a" style="left:230px;top:720px;width:810px;height:1px;background:#d8dce0"></div>
<div class="row" style="top:721px;">
<div class="cell" style="left:0px;width:59px">5.79.66.2:...</div>
<div class="cell" style="left:62px;width:60px">234234242</div>
<div class="cell" style="left:124px;width:60px">orerzheef...</div>
<div class="cell" style="left:186px;width:60px">dcxufKM%...</div>
<div class="cell" style="left:248px;width:60px">mail.mailh...</div>
<div class="cell" style="left:310px;width:60px">995</div>
<div class="cell" style="left:372px;width:60px">POP3</div>
<div class="cell" style="left:434px;width:60px">Yes</div>
<div class="cell" style="left:496px;width:60px">abidingwo...</div>
<div class="cell" style="left:558px;width:60px"></div>
<div class="cell" style="left:620px;width:60px">2019/01/...</div>
<div class="cell" style="left:682px;width:60px">Bad End. ...</div>
<div class="cell" style="left:744px;width:65px">Fail</div>
</div>
<div class="a" style="left:230px;top:742px;width:810px;height:1px;background:#d8dce0"></div>
<div class="row" style="top:743px;">
<div class="cell" style="left:0px;width:59px">5.79.66.2:...</div>
<div class="cell" style="left:62px;width:60px">234234242</div>
<div class="cell" style="left:124px;width:60px">ymhkyyqdl...</div>
<div class="cell" style="left:186px;width:60px">ditneTN@...</div>
<div class="cell" style="left:248px;width:60px">mail.mailh...</div>
<div class="cell" style="left:310px;width:60px">995</div>
<div class="cell" style="left:372px;width:60px">POP3</div>
<div class="cell" style="left:434px;width:60px">Yes</div>
<div class="cell" style="left:496px;width:60px">visitorund...</div>
<div class="cell" style="left:558px;width:60px"></div>
<div class="cell" style="left:620px;width:60px">2019/01/...</div>
<div class="cell" style="left:682px;width:60px">Bad End. ...</div>
<div class="cell" style="left:744px;width:65px">Fail</div>
</div>
<div class="a" style="left:230px;top:764px;width:810px;height:1px;background:#d8dce0"></div>
<div class="row" style="top:765px;">
<div class="cell" style="left:0px;width:59px">5.79.66.2:...</div>
<div class="cell" style="left:62px;width:60px">234234242</div>
<div class="cell" style="left:124px;width:60px">xmyaaoqv...</div>
<div class="cell" style="left:186px;width:60px">azbwuHK...</div>
<div class="cell" style="left:248px;width:60px">mail.chea...</div>
<div class="cell" style="left:310px;width:60px">995</div>
<div class="cell" style="left:372px;width:60px">POP3</div>
<div class="cell" style="left:434px;width:60px">Yes</div>
<div class="cell" style="left:496px;width:60px">scrubcaref...</div>
<div class="cell" style="left:558px;width:60px"></div>
<div class="cell" style="left:620px;width:60px">2019/01/...</div>
<div class="cell" style="left:682px;width:60px">Wait Time...</div>
<div class="cell" style="left:744px;width:65px">Fail</div>
</div>
<div class="a" style="left:230px;top:786px;width:810px;height:1px;background:#d8dce0"></div>
<div class="row" style="top:787px;">
<div class="cell" style="left:0px;width:59px">5.79.66.2:...</div>
<div class="cell" style="left:62px;width:60px">234234242</div>
<div class="cell" style="left:124px;width:60px">fuqieajpfx...</div>
<div class="cell" style="left:186px;width:60px">apeowBJ!!...</div>
<div class="cell" style="left:248px;width:60px">mail.1tmail...</div>
<div class="cell" style="left:310px;width:60px">995</div>
<div class="cell" style="left:372px;width:60px">POP3</div>
<div class="cell" style="left:434px;width:60px">Yes</div>
<div class="cell" style="left:496px;width:60px">tieactivity03</div>
<div class="cell" style="left:558px;width:60px"></div>
<div class="cell" style="left:620px;width:60px">2019/01/...</div>
<div class="cell" style="left:682px;width:60px">Did not fin...</div>
<div class="cell" style="left:744px;width:65px">Fail</div>
</div>
<div class="a" style="left:230px;top:808px;width:810px;height:1px;background:#d8dce0"></div>
<div class="row" style="top:809px;">
<div class="cell" style="left:0px;width:59px">5.79.66.2:...</div>
<div class="cell" style="left:62px;width:60px">234234242</div>
<div class="cell" style="left:124px;width:60px">imivbrvdrg...</div>
<div class="cell" style="left:186px;width:60px">uninmOK...</div>
<div class="cell" style="left:248px;width:60px">mail.mailh...</div>
<div class="cell" style="left:310px;width:60px">995</div>
<div class="cell" style="left:372px;width:60px">POP3</div>
<div class="cell" style="left:434px;width:60px">Yes</div>
<div class="cell" style="left:496px;width:60px">nosyshoc...</div>
<div class="cell" style="left:558px;width:60px"></div>
<div class="cell" style="left:620px;width:60px">2019/01/...</div>
<div class="cell" style="left:682px;width:60px">Bad End. ...</div>
<div class="cell" style="left:744px;width:65px">Fail</div>
</div>
<div class="a" style="left:230px;top:830px;width:810px;height:1px;background:#d8dce0"></div>
<div class="row" style="top:831px;">
<div class="cell" style="left:0px;width:59px">5.79.66.2:...</div>
<div class="cell" style="left:62px;width:60px">234234242</div>
<div class="cell" style="left:124px;width:60px">qbqbredtq...</div>
<div class="cell" style="left:186px;width:60px">sxvdeVH=...</div>
<div class="cell" style="left:248px;width:60px">mail.chea...</div>
<div class="cell" style="left:310px;width:60px">995</div>
<div class="cell" style="left:372px;width:60px">POP3</div>
<div class="cell" style="left:434px;width:60px">Yes</div>
<div class="cell" style="left:496px;width:60px">dispensabl...</div>
<div class="cell" style="left:558px;width:60px"></div>
<div class="cell" style="left:620px;width:60px">2019/01/...</div>
<div class="cell" style="left:682px;width:60px">Bad End. ...</div>
<div class="cell" style="left:744px;width:65px">Fail</div>
</div>
<div class="a" style="left:230px;top:852px;width:810px;height:1px;background:#d8dce0"></div>
<div class="row" style="top:853px;">
<div class="cell" style="left:0px;width:59px">5.79.66.2:...</div>
<div class="cell" style="left:62px;width:60px">234234242</div>
<div class="cell" style="left:124px;width:60px">xqoneifhift</div>
<div class="cell" style="left:186px;width:60px">aloqeLD((37</div>
<div class="cell" style="left:248px;width:60px">mail.mailh...</div>
<div class="cell" style="left:310px;width:60px">995</div>
<div class="cell" style="left:372px;width:60px">POP3</div>
<div class="cell" style="left:434px;width:60px">Yes</div>
<div class="cell" style="left:496px;width:60px">jailliterate04</div>
<div class="cell" style="left:558px;width:60px"></div>
<div class="cell" style="left:620px;width:60px">2019/01/...</div>
<div class="cell" style="left:682px;width:60px">Bad End. ...</div>
<div class="cell" style="left:744px;width:65px">Fail</div>
</div>
<div class="a" style="left:230px;top:874px;width:810px;height:1px;background:#d8dce0"></div>
<div class="vl" style="left:290px;top:105px;height:760px"></div>
<div class="vl" style="left:352px;top:105px;height:760px"></div>
<div class="vl" style="left:414px;top:105px;height:760px"></div>
<div class="vl" style="left:476px;top:105px;height:760px"></div>
<div class="vl" style="left:538px;top:105px;height:760px"></div>
<div class="vl" style="left:600px;top:105px;height:760px"></div>
<div class="vl" style="left:662px;top:105px;height:760px"></div>
<div class="vl" style="left:724px;top:105px;height:760px"></div>
<div class="vl" style="left:786px;top:105px;height:760px"></div>
<div class="vl" style="left:848px;top:105px;height:760px"></div>
<div class="vl" style="left:910px;top:105px;height:760px"></div>
<div class="vl" style="left:972px;top:105px;height:760px"></div>
<div class="vl" style="left:1039px;top:105px;height:760px"></div>
<div class="a" style="left:230px;top:127px;width:810px;height:21px;border-top:1px dotted #000;border-bottom:1px dotted #000"></div>
<div class="a" style="left:230px;top:127px;width:1px;height:21px;border-left:1px dotted #000"></div>
<div class="a" style="left:1040px;top:81px;width:17px;height:784px;background:linear-gradient(90deg,#f0f1f3,#f7f8f9)"></div>
<svg class="a" style="left:1044px;top:86px" width="10" height="6" viewBox="0 0 10 6"><path d="M0 6 L5 0 L10 6Z" fill="#4a5878"/></svg>
<div class="a" style="left:1041px;top:99px;width:15px;height:273px;background:linear-gradient(90deg,#e4e6e8,#f4f5f6 50%,#e0e2e4);border:1px solid #c8ccd0;border-radius:2px"></div>
<div class="a" style="left:1045px;top:234px;width:8px;height:5px;border-top:1px solid #8a9098;border-bottom:1px solid #8a9098"></div>
<div class="a" style="left:1045px;top:236px;width:8px;height:1px;background:#8a9098"></div>
<div class="a" style="left:230px;top:865px;width:828px;height:25px;background:linear-gradient(#ffffff,#fafbfc 60%,#e8ebee)"></div>
<div class="t" style="left:233px;top:872px;font-size:12.5px;color:#ff0000">1</div>
<div class="t" style="left:247px;top:872px;font-size:12.5px;color:#111">2</div>
<div class="t" style="left:261px;top:872px;font-size:12.5px;color:#111">3</div>
<div class="t" style="left:275px;top:872px;font-size:12.5px;color:#111">4</div>
<div class="t" style="left:289px;top:872px;font-size:12.5px;color:#111">5</div>
<div class="t" style="left:303px;top:872px;font-size:12.5px;color:#111">6</div>
<div class="t" style="left:317px;top:872px;font-size:12.5px;color:#111">7</div>
<div class="t" style="left:331px;top:872px;font-size:12.5px;color:#111">8</div>
<div class="t" style="left:345px;top:872px;font-size:12.5px;color:#111">9</div>
<div class="t" style="left:956px;top:872px;font-size:12.5px;font-weight:700;color:#222">1/9</div>
<div class="a" style="left:979px;top:867px;width:49px;height:21px;background:#fff;border:1px solid #a0a8b0"></div>
<div class="t" style="left:1033px;top:872px;font-size:12.5px;font-weight:700;color:#c03030">GO</div>
<div class="a" style="left:230px;top:890px;width:828px;height:46px;background:#000"></div>
<div class="t" style="left:234px;top:897px;font-size:13px;color:#c8282a">1.Click 'Open Account File' to show registration results.</div>
<div class="t" style="left:234px;top:920px;font-size:13px;color:#c8282a">2.You can change registration Information by double click cells.Ctrl+LeftClick:Choose one column.</div>
<div class="a" style="left:230px;top:936px;width:828px;height:32px;background:linear-gradient(#ffffff,#f8f9fa 60%,#eceef0)"></div>
<svg class="a" style="left:235px;top:941px" width="23" height="23" viewBox="0 0 23 23"><defs><linearGradient id="rg" x1="0" y1="0" x2="0" y2="1"><stop offset="0" stop-color="#b4dc3c"/><stop offset="1" stop-color="#86b828"/></linearGradient></defs><g stroke="#6a9a1a" stroke-width="0.6"><path d="M0.5 9 Q4 1 11 1 Q17 1 19.5 5 L21.5 3 V10.3 H13.5 L16 8 Q14 5.5 11 5.5 Q6.5 5.5 4.5 9 Z" fill="url(#rg)"/><path d="M21.5 14.5 Q18 21.5 11 21.5 Q5 21.5 2.5 17.5 L0.5 20 V11.5 H8.5 L6 14 Q8 17 11 17 Q15.5 17 17.5 14.5 Z" fill="url(#rg)"/></g></svg>
<div class="t" style="left:262px;top:946px;font-size:13px;font-weight:700;color:#1a1a2a">Page Total: </div>
<div class="t" style="left:335px;top:947px;font-size:12.5px;color:#ff2020">100</div>
<div class="a" style="left:358px;top:947px;width:1px;height:12px;background:#333"></div>
<div class="t" style="left:361px;top:946px;font-size:13px;font-weight:700;color:#1a1a2a;letter-spacing:-0.9px">Success:</div>
<div class="t" style="left:415px;top:947px;font-size:12.5px;color:#ff2020">0</div>
<div class="a" style="left:424px;top:947px;width:1px;height:12px;background:#333"></div>
<div class="t" style="left:428px;top:946px;font-size:13px;font-weight:700;color:#1a1a2a;letter-spacing:-0.4px">Fail:</div>
<div class="t" style="left:456px;top:947px;font-size:12.5px;color:#ff2020">100</div>
<div class="a" style="left:564px;top:941px;width:1px;height:22px;background:#8a9098"></div>
<div class="t" style="left:569px;top:946px;font-size:13px;color:#1a2030">Export</div>
<div class="a" style="left:612px;top:941px;width:1px;height:22px;background:#8a9098"></div>
<div class="t" style="left:617px;top:946px;font-size:13px;color:#1a2030">Open Account File</div>
<div class="a" style="left:727px;top:941px;width:1px;height:22px;background:#8a9098"></div>
<div class="t" style="left:732px;top:946px;font-size:13px;color:#1a2030">Delete Failed Accounts</div>
<div class="a" style="left:868px;top:941px;width:1px;height:22px;background:#8a9098"></div>
<div class="t" style="left:873px;top:946px;font-size:13px;color:#1a2030">Delete Accounts</div>
<div class="a" style="left:971px;top:941px;width:1px;height:22px;background:#8a9098"></div>
<div class="t" style="left:976px;top:946px;font-size:13px;color:#1a2030">Save Account</div>
<div class="a" style="left:230px;top:968px;width:828px;height:2px;background:#b0b8c0"></div>
<div class="a" style="left:230px;top:970px;width:52px;height:5px;background:#e4e6e8;border:1px solid #a0a8b0"></div>
<div class="a" style="left:355px;top:970px;width:703px;height:5px;background:#fff;border-left:1px solid #a0a8b0;border-top:1px solid #a0a8b0"></div>
</div>
<div id="rw">
<div class="a" style="left:0;top:0;width:750px;height:9px;background:#2b2b2b"></div>
<div class="a" style="left:0;top:9px;width:750px;height:53px;background:linear-gradient(#c3d3db 0%,#dce6ea 45%,#f2f5f6 100%)"></div>
<div class="t" style="left:218px;top:18px;font-size:11.7px;color:#3a3a3a">CapMonster Standard v2.10.8.7 by ZennoLab.com</div>
<div class="a" style="left:711px;top:9px;width:29px;height:22px;border:1px solid #74787e"></div>
<div class="a" style="left:720px;top:21px;width:10px;height:3px;background:#111"></div>
<div class="a" style="left:739px;top:9px;width:20px;height:22px;border:1px solid #74787e"></div>
<div class="a" style="left:748px;top:16px;width:5px;height:8px;background:#111"></div>
<div class="t" style="left:0px;top:47px;font-size:10.7px;color:#2a2a2a">process</div>
<div class="t" style="left:62px;top:47px;font-size:10.7px;color:#2a2a2a">Modules base</div>
<div class="a" style="left:0;top:62px;width:750px;height:254px;background:#e9ecef"></div>
<div class="a" style="left:-10px;top:71px;width:270px;height:230px;background:#fff;border:1px solid #b4bac0"></div>
<div class="a" style="left:-9px;top:72px;width:268px;height:19px;background:linear-gradient(#e6e9ec,#dde1e5);border-bottom:1px solid #c8ccd0"></div>
<div class="lbl" style="left:-1px;top:110px">us:</div>
<div class="lbl" style="left:-1px;top:136px">unts:</div>
<div class="lbl" style="left:-1px;top:162px">captchas:</div>
<div class="lbl" style="left:-1px;top:188px">l captchas:</div>
<div class="lbl" style="left:-1px;top:214px">ey:</div>
<div class="lbl" style="left:-1px;top:240px">sponse time:</div>
<div class="val" style="left:79px;top:110px;color:#1a8a1a">Running</div>
<div class="val" style="left:79px;top:136px;color:#111">0/5</div>
<div class="val" style="left:79px;top:162px;color:#111">1600352</div>
<div class="val" style="left:79px;top:188px;color:#111">1581889</div>
<div class="val" style="left:79px;top:214px;color:#111">$194.707</div>
<div class="val" style="left:79px;top:240px;color:#111">5.17 sec</div>
<div class="a" style="left:268px;top:71px;width:280px;height:230px;background:#fff;border:1px solid #b4bac0"></div>
<div class="a" style="left:269px;top:72px;width:278px;height:19px;background:linear-gradient(#e6e9ec,#dde1e5);border-bottom:1px solid #c8ccd0"></div>
<div class="t" style="left:280px;top:76px;font-size:12.3px;color:#2a2a2a">Sitekey addon statistic</div>
<div class="lbl" style="left:304px;top:110px">Processed tasks:</div>
<div class="val" style="left:408px;top:110px">120387</div>
<div class="lbl" style="left:304px;top:136px">Successful tasks:</div>
<div class="val" style="left:408px;top:136px">16341 (13%)</div>
<div class="lbl" style="left:304px;top:162px">Banned Ip:</div>
<div class="val" style="left:408px;top:162px">12603 (10%)</div>
<div class="lbl" style="left:304px;top:188px">Bad Ip:</div>
<div class="val" style="left:408px;top:188px">77921 (64%)</div>
<div class="lbl" style="left:304px;top:214px">Saved money:</div>
<div class="val" style="left:408px;top:214px">$32.682</div>
<div class="a" style="left:285px;top:108px;width:13px;height:15px;background:#fafafa;border:1px solid #9aa0a6"></div>
<svg class="a" style="left:287px;top:108px" width="16" height="14" viewBox="0 0 16 14"><path d="M2 9 L4 11 L7 7" stroke="#2a9a2a" stroke-width="1.5" fill="none"/><path d="M8 10 L14 3" stroke="#e0a030" stroke-width="2.5"/></svg>
<div class="a" style="left:285px;top:133px;width:15px;height:15px;border-radius:8px;background:radial-gradient(circle at 40% 35%,#8ce060,#2c9a1c)"></div>
<svg class="a" style="left:285px;top:133px" width="15" height="15" viewBox="0 0 15 15"><path d="M4 7.5 L6.5 10 L11 5" stroke="#fff" stroke-width="2" fill="none"/></svg>
<svg class="a" style="left:284px;top:159px" width="18" height="16" viewBox="0 0 18 16"><path d="M9 1 L17 15 H1 Z" fill="#f7c21a" stroke="#c08a10" stroke-width="1"/><rect x="8.2" y="5" width="1.6" height="5.5" fill="#222"/><rect x="8.2" y="11.5" width="1.6" height="1.6" fill="#222"/></svg>
<svg class="a" style="left:286px;top:185px" width="14" height="17" viewBox="0 0 14 17"><rect x="1" y="0" width="12" height="2" fill="#3a6ac8"/><rect x="1" y="15" width="12" height="2" fill="#3a6ac8"/><path d="M2.5 2 H11.5 L7 8.5 L11.5 15 H2.5 L7 8.5 Z" fill="#f6c030"/></svg>
<div class="a" style="left:285px;top:213px;width:16px;height:12px;background:#9ad08a;border:1px solid #3a8a3a"></div>
<div class="a" style="left:288px;top:216px;width:10px;height:6px;border:1px solid #3a8a3a;background:#c8e8c0"></div>
<div class="a" style="left:284px;top:236px;width:86px;height:30px;background:#dcdcdc;border:1px solid #707070"></div>
<div class="t" style="left:309px;top:244px;font-size:12.5px;color:#111">Reset</div>
<div class="a" style="left:556px;top:94px;width:200px;height:207px;background:#fff;border:1px solid #b4bac0"></div>
<div class="a" style="left:634px;top:73px;width:60px;height:22px;background:linear-gradient(#e4e8ec,#d6dbe0);border:1px solid #a8b0b8"></div>
<div class="a" style="left:693px;top:73px;width:70px;height:22px;background:linear-gradient(#e4e8ec,#d6dbe0);border:1px solid #a8b0b8"></div>
<div class="a" style="left:559px;top:71px;width:75px;height:24px;background:#fff;border:1px solid #a8b0b8;border-bottom:none"></div>
<div class="t" style="left:568px;top:77px;font-size:11.6px;color:#222">Processing</div>
<div class="t" style="left:642px;top:78px;font-size:11.6px;color:#222">Threads</div>
<div class="t" style="left:701px;top:78px;font-size:11.6px;color:#222">Modules</div>
<div class="t" style="left:634px;top:111px;font-size:12.8px;color:#3c46c8">0 captchas/min</div>
<div class="a" style="left:570px;top:138px;width:200px;height:150px;background:#fff;border:1px solid #b8bec4;border-bottom:1px solid #5aa05a"></div>
<div class="a" style="left:576px;top:139px;width:0;height:147px;border-left:1px dashed #ececec"></div>
<div class="a" style="left:626px;top:139px;width:0;height:147px;border-left:1px dashed #ececec"></div>
<div class="a" style="left:676px;top:139px;width:0;height:147px;border-left:1px dashed #ececec"></div>
<div class="a" style="left:726px;top:139px;width:0;height:147px;border-left:1px dashed #ececec"></div>
<div class="a" style="left:571px;top:148px;width:180px;height:0;border-top:1px dashed #ececec"></div>
<div class="a" style="left:571px;top:168px;width:180px;height:0;border-top:1px dashed #ececec"></div>
<div class="a" style="left:571px;top:188px;width:180px;height:0;border-top:1px dashed #ececec"></div>
<div class="a" style="left:571px;top:208px;width:180px;height:0;border-top:1px dashed #ececec"></div>
<div class="a" style="left:571px;top:228px;width:180px;height:0;border-top:1px dashed #ececec"></div>
<div class="a" style="left:571px;top:248px;width:180px;height:0;border-top:1px dashed #ececec"></div>
<div class="a" style="left:571px;top:268px;width:180px;height:0;border-top:1px dashed #ececec"></div>
<div class="t" style="left:343px;top:299px;font-size:12px;font-weight:700;color:#6a7078;letter-spacing:0.5px">....</div>
<div class="a" style="left:0;top:315px;width:750px;height:1px;background:#b4bac0"></div>
<div class="a" style="left:0;top:316px;width:750px;height:659px;background:#fff"></div>
<div class="a" style="left:745px;top:316px;width:5px;height:659px;background:#f0f0f0"></div>
<div class="a" style="left:746px;top:953px;width:4px;height:22px;border:1px solid #a8acb0;border-right:none;border-bottom:none;border-radius:2px 0 0 0;background:#f8f8f8"></div>
<div class="a" style="left:748px;top:327px;width:2px;height:2px;background:#333"></div>
<svg class="a" style="left:30px;top:319px;filter:blur(0.7px)" width="150" height="150" viewBox="0 0 150 150">
<rect x="0" y="0" width="50" height="50" fill="#5a8a3a"/>
<path d="M0 0 H26 L24 18 L18 28 L8 26 L0 20 Z" fill="#7e2c2e"/><path d="M4 4 L14 8 L20 20 L12 22 Z" fill="#a04440"/>
<circle cx="35" cy="12" r="7" fill="#6a9a48"/><circle cx="12" cy="38" r="8" fill="#6a9a42"/><circle cx="38" cy="36" r="6" fill="#4e7e34"/><circle cx="26" cy="30" r="4" fill="#8ab860"/>
<rect x="50" y="0" width="50" height="50" fill="#3e3426"/>
<path d="M58 0 H100 V30 L80 20 Z" fill="#4a3424"/><path d="M70 6 L84 12 L92 4 L100 14 V0 H74 Z" fill="#6a3e2a"/>
<path d="M50 34 L100 42 V50 H50 Z" fill="#3a4446"/><path d="M64 33 L100 40 V42 L64 35 Z" fill="#8a9090"/>
<path d="M50 22 L62 26 L64 44 L56 50 H50 Z" fill="#6a8aa2"/><rect x="51" y="32" width="9" height="2" fill="#c04040"/>
<path d="M60 46 L70 48 M76 47 L86 49" stroke="#b0b4b0" stroke-width="1"/>
<rect x="100" y="0" width="50" height="50" fill="#8c8882"/>
<rect x="100" y="0" width="38" height="15" fill="#9a7a5c"/><rect x="105" y="0" width="33" height="2" fill="#8a3a32"/><rect x="112" y="6" width="6" height="3" fill="#c8c8c8"/>
<path d="M100 15 H150 L138 18 H100 Z" fill="#5a7040"/>
<path d="M106 22 L140 26 L138 30 L104 26 Z M110 29 L146 34 L144 38 L108 33 Z" fill="#b8b6b2"/>
<path d="M118 50 Q120 36 150 34 V38 Q126 40 124 50 Z" fill="#a8a498"/>
<circle cx="144" cy="11" r="5" fill="#b01818"/><rect x="143.5" y="16" width="1.2" height="34" fill="#2a2a2a"/>
<path d="M140 50 L150 44 V50 Z" fill="#4a7a30"/>
<rect x="0" y="50" width="50" height="50" fill="#d0d0cc"/>
<path d="M0 50 H28 L34 58 L45 50 H50 V74 H0 Z" fill="#7a9a50"/><path d="M28 50 L34 58 L45 50 Z" fill="#e0e4e8"/>
<circle cx="10" cy="60" r="9" fill="#8aaa58"/><circle cx="40" cy="64" r="8" fill="#5a7a3a"/>
<rect x="3" y="66" width="1.5" height="10" fill="#333"/><rect x="9" y="72" width="7" height="5" fill="#2a2a30"/><rect x="33" y="71" width="7" height="6" fill="#2a2a30"/>
<path d="M0 78 L50 78 L50 80 L0 80 Z" fill="#a8a8a4"/>
<path d="M4 88 H10 M14 88 H20 M24 88 H30 M34 88 H40 M44 88 H49" stroke="#f4f4f4" stroke-width="2.5"/>
<rect x="50" y="50" width="50" height="50" fill="#8c8a86"/>
<rect x="50" y="50" width="50" height="15" fill="#d0d4d8"/><path d="M50 50 H100 V58 Q80 52 50 60 Z" fill="#e4e6e8"/>
<rect x="65" y="62" width="35" height="16" fill="#a89276"/><rect x="68" y="64" width="3" height="13" fill="#6a5a48"/><rect x="80" y="64" width="6" height="13" fill="#4a4440"/>
<rect x="56" y="74" width="44" height="6" fill="#3a4a30"/><rect x="87" y="60" width="1.5" height="38" fill="#c8c8c8"/><rect x="72" y="78" width="8" height="4" fill="#2a2a2a"/>
<path d="M50 82 L100 84 V100 H50 Z" fill="#9a9690"/>
<rect x="100" y="50" width="50" height="50" fill="#7a7874"/>
<rect x="100" y="50" width="50" height="16" fill="#64463c"/><rect x="100" y="58" width="50" height="8" fill="#3a4a30"/><rect x="140" y="50" width="10" height="14" fill="#7a6a68"/>
<path d="M100 66 L150 68 V70 L100 69 Z" fill="#9a9a94"/>
<path d="M104 73 L134 76 L132 79 L102 76 Z M112 80 L150 83 V87 L110 84 Z M126 88 L150 90 V93 L124 91 Z" fill="#c8c6c2"/>
<path d="M100 92 L130 98 L100 100 Z" fill="#5a5856"/>
<rect x="0" y="100" width="50" height="50" fill="#8a8a88"/>
<rect x="0" y="100" width="50" height="22" fill="#c8ccd0"/><path d="M0 100 H50 V108 Q25 104 0 110Z" fill="#d4d8dc"/>
<rect x="0" y="122" width="50" height="3" fill="#7a5a40"/><rect x="0" y="125" width="50" height="4" fill="#4a5a40"/>
<path d="M22 128 L0 150 M25 128 L18 150 M28 128 L40 150" stroke="#b0b0ae" stroke-width="1"/>
<rect x="50" y="100" width="50" height="50" fill="#c8c8c4"/>
<rect x="50" y="100" width="50" height="4" fill="#8a5a38"/><rect x="50" y="104" width="50" height="11" fill="#8a8a50"/><rect x="50" y="115" width="50" height="4" fill="#6a6a66"/>
<path d="M52 128 L58 121 L78 120 L90 126 L90 134 L54 136 Z" fill="#8a2830"/><path d="M60 122 L76 121 L82 126 L62 127 Z" fill="#3a2a30"/>
<circle cx="58" cy="135" r="2.5" fill="#222"/><circle cx="87" cy="133" r="2.5" fill="#222"/>
<path d="M50 140 L100 130 M50 148 L100 138" stroke="#e8e8e4" stroke-width="1.5"/>
<rect x="100" y="100" width="50" height="50" fill="#a4a8ac"/>
<path d="M100 128 Q120 126 135 133 L150 134 V140 H100 Z" fill="#3a5030"/>
<rect x="100" y="136" width="50" height="14" fill="#9a9c90"/><circle cx="108" cy="142" r="3" fill="#5a7a4a"/><circle cx="128" cy="140" r="3" fill="#6a8a5a"/><rect x="116" y="144" width="8" height="5" fill="#d0d0cc"/>
<path d="M137 124 H143 V136 H141 V150 H139 V136 H137 Z" fill="#2a2a28"/>
</svg>
<svg class="a" style="left:55px;top:473px;filter:blur(0.7px)" width="100" height="100" viewBox="0 0 100 100">
<rect width="100" height="100" fill="#7a8050"/>
<rect width="100" height="50" fill="#3e4c32"/>
<path d="M0 0 H100 V20 Q70 30 50 10 Q30 0 0 14 Z" fill="#5a6a40"/>
<path d="M6 24 L34 16 L60 26 V38 H6 Z" fill="#b4b4ac"/><rect x="20" y="28" width="34" height="6" fill="#6a6a60"/>
<path d="M0 44 L20 20 L26 22 L8 50 Z" fill="#4a4030"/><rect x="88" y="10" width="4" height="40" fill="#3a3228"/>
<path d="M10 38 L44 36 L48 46 L44 56 L12 56 Z" fill="#18191c"/><rect x="36" y="40" width="4" height="4" fill="#a02a2a"/>
<path d="M60 50 H100 V58 L60 56 Z" fill="#5a5a40"/>
<path d="M44 54 L100 58 V66 L50 62 Z" fill="#7a6a58"/>
<ellipse cx="18" cy="70" rx="20" ry="16" fill="#5e8a38"/>
<path d="M0 84 H100 V100 H0 Z" fill="#8a8a58"/>
<rect x="80" y="66" width="13" height="6" fill="#2a2a2a"/><rect x="85" y="72" width="2" height="28" fill="#222"/>
</svg>
<svg class="a" style="left:55px;top:577px;filter:blur(0.7px)" width="100" height="100" viewBox="0 0 100 100">
<rect width="100" height="100" fill="#6e6e6c"/>
<rect width="100" height="40" fill="#3c4832"/>
<path d="M0 0 H20 V40 H0 Z" fill="#6a6456"/><path d="M0 0 H10 L20 4 V0 Z" fill="#d8dcd8"/>
<path d="M20 0 H100 V10 Q60 20 20 6Z" fill="#4a5a3a"/>
<rect x="88" y="0" width="4" height="44" fill="#3a3a30"/>
<rect x="64" y="24" width="16" height="18" fill="#e4e6ea"/><rect x="66" y="30" width="6" height="4" fill="#3a5a9a"/>
<path d="M16 36 L32 34 L34 44 L14 46 Z" fill="#2a2228"/><path d="M28 26 L44 28 L44 36 L30 38 Z" fill="#9a9a9e"/>
<path d="M0 40 H100 V54 H0 Z" fill="#5a5a56"/>
<path d="M0 44 L6 42 L8 60 L0 60Z" fill="#5a6a3a"/><path d="M84 40 L100 40 V64 L88 56 Z" fill="#9a9890"/>
<path d="M8 62 H18 L16 67 H6 Z M24 62 H34 L32 67 H22 Z M42 62 H52 L51 67 H41 Z M60 62 H70 L70 67 H60 Z M77 62 H86 L86 67 H77 Z" fill="#e8e8e6"/>
<ellipse cx="44" cy="85" rx="8" ry="3" fill="#5a5856"/>
<path d="M84 66 Q92 74 100 76 V80 Q88 78 82 68 Z" fill="#c8c8c4"/>
</svg>
<svg class="a" style="left:55px;top:681px;filter:blur(0.5px)" width="100" height="100" viewBox="0 0 100 100">
<rect width="100" height="100" fill="#bcc0c0"/>
<path d="M0 22 Q50 34 100 44 M0 34 Q50 40 100 46 M0 52 H100" stroke="#5a5e62" stroke-width="0.7" fill="none"/>
<path d="M0 64 V54 L8 50 L16 54 L20 60 L40 62 L44 54 L52 46 L58 44 L62 34 L70 26 L78 30 L84 36 L90 30 L96 26 L100 28 V64 Z" fill="#3e4a34"/>
<path d="M44 58 L50 48 L56 46 L62 52 L60 62 Z" fill="#6a7a3a"/>
<rect x="20" y="42" width="3" height="6" fill="#222"/><rect x="32" y="42" width="3" height="6" fill="#222"/><rect x="12" y="44" width="48" height="0.8" fill="#555"/>
<rect x="89" y="46" width="1.5" height="24" fill="#777"/><rect x="70" y="50" width="1" height="16" fill="#777"/>
<path d="M0 64 L100 62 V100 H0 Z" fill="#8a8884"/>
<path d="M72 66 L100 68 V80 L86 78 Z" fill="#6a8a40"/>
<path d="M0 70 L10 68 L6 86 L0 90 Z" fill="#8a8a60"/>
<rect x="15" y="58" width="14" height="12" rx="1" fill="#e8e8ec"/><rect x="17" y="60" width="10" height="4" fill="#4a5060"/>
<rect x="60" y="62" width="8" height="6" fill="#e0e0e4"/>
<path d="M30 100 L38 70" stroke="#c8a040" stroke-width="0.8"/>
</svg>
<svg class="a" style="left:55px;top:785px;filter:blur(0.7px)" width="100" height="100" viewBox="0 0 100 100">
<defs><linearGradient id="sky5" x1="0" y1="0" x2="0" y2="1"><stop offset="0" stop-color="#a8b8c4"/><stop offset="1" stop-color="#c8d0d4"/></linearGradient></defs>
<rect width="100" height="100" fill="#8a9a50"/>
<rect width="100" height="60" fill="url(#sky5)"/>
<path d="M0 30 Q30 20 60 28 Q80 24 100 30 V40 Q60 36 0 44Z" fill="#bac4cc"/>
<path d="M0 58 L30 55 L50 56 L70 52 L85 50 L100 47 V62 H0 Z" fill="#b0a890"/>
<path d="M0 62 L40 62 L60 58 L80 54 L100 52 V72 H0 Z" fill="#a09a80"/>
<path d="M36 72 L50 66 L70 62 L90 58 L100 56 V74 L36 76 Z" fill="#3a5a2a"/>
<rect x="0" y="64" width="30" height="8" fill="#d0ccc4"/>
<path d="M0 74 L100 72 V100 H0 Z" fill="#8c9a52"/>
<path d="M0 90 L100 84 V88 L0 96 Z" fill="#a89a70"/>
<path d="M70 100 Q88 96 100 92 V100 Z" fill="#e8e8e8"/><path d="M92 100 L100 96 V100Z" fill="#1a1a1a"/>
</svg>
<svg class="a" style="left:0px;top:889px" width="218" height="86" viewBox="0 0 218 86">
<defs><linearGradient id="skyb" x1="0" y1="0" x2="0" y2="1"><stop offset="0" stop-color="#b8c0d0"/><stop offset="0.45" stop-color="#acb6c8"/><stop offset="0.7" stop-color="#c8d0dc"/><stop offset="1" stop-color="#b8c2d2"/></linearGradient>
<filter id="bl" x="-5%" y="-5%" width="110%" height="110%"><feGaussianBlur stdDeviation="0.5"/></filter></defs>
<rect width="218" height="86" fill="url(#skyb)"/>
<g filter="url(#bl)">
<path d="M0 42 Q50 40 100 46 Q160 52 218 44 V62 Q150 58 90 62 Q40 66 0 60 Z" fill="#dfe4ec"/>
<path d="M0 64 Q60 68 120 64 Q170 60 218 66 V76 Q120 72 0 78 Z" fill="#d4dae4"/>
<path d="M0 10.5 H218 M0 34.5 H218 M0 50 H218 M0 57 H218 M0 62 H218 M0 77.5 H218 M0 83 H218" stroke="#4a5058" stroke-width="0.9" fill="none"/>
<path d="M0 39 Q60 37 120 39 Q170 40 218 38" stroke="#2a3038" stroke-width="1.4" fill="none"/>
<rect x="36" y="53" width="17" height="23" fill="#2a2c2e"/><rect x="45" y="48" width="1.5" height="5" fill="#333"/>
<rect x="78" y="46.5" width="13" height="27" fill="#3a3430"/><rect x="84" y="42" width="1.5" height="5" fill="#333"/>
<rect x="122" y="43" width="20" height="25" fill="#2e3230"/>
<path d="M92 44 L122 41.5 L122 48.5 L93 51 Z" fill="#3a8a5a"/>
<rect x="87" y="80" width="7" height="3.5" fill="#5a5a58"/>
<path d="M74 30 Q90 24 100 6 M104 40 Q120 30 130 10 M110 20 Q140 28 170 60 M140 4 Q160 20 180 50 Q190 70 218 80 M150 0 Q170 10 200 14 M180 5 Q200 20 218 26 M196 0 L214 24 M120 60 Q150 50 180 56 Q200 62 218 58 M160 40 Q190 36 218 30 M130 36 Q150 40 165 70 M170 70 Q190 74 200 86 M150 80 L162 64 M100 64 Q115 50 140 46 M205 30 L212 86 M186 20 Q176 40 196 60" stroke="#8a7462" stroke-width="1" fill="none"/>
<path d="M90 20 Q96 12 108 8 M120 16 L134 26 M176 30 L192 44 M140 56 L152 66 M188 50 L210 52" stroke="#6a5a4c" stroke-width="0.8" fill="none"/>
</g>
<rect x="212" y="0" width="6" height="6" fill="#5a3a30"/>
<path d="M0 0 H12 L11 1.5 H0Z" fill="#6a6a6a"/>
</svg>
<div class="t" style="left:238px;top:389px;font-size:11px;color:#111">0.87 sec</div>
<div class="t" style="left:298px;width:200px;text-align:center;top:389px;font-size:10.9px;color:#111">&quot;crosswalks&quot; 3,4,6</div>
<div class="t" style="left:599px;top:389px;font-size:10.8px;color:#1a1ae0">ReCaptcha2</div>
<div class="t" style="left:238px;top:518px;font-size:11px;color:#111">0.88 sec</div>
<div class="t" style="left:298px;width:200px;text-align:center;top:518px;font-size:10.9px;color:#111">&quot;crosswalks&quot; not found</div>
<div class="t" style="left:599px;top:518px;font-size:10.8px;color:#1a1ae0">ReCaptcha2</div>
<div class="t" style="left:238px;top:622px;font-size:11px;color:#111">0.89 sec</div>
<div class="t" style="left:298px;width:200px;text-align:center;top:622px;font-size:10.9px;color:#111">&quot;crosswalks&quot; found</div>
<div class="t" style="left:599px;top:622px;font-size:10.8px;color:#1a1ae0">ReCaptcha2</div>
<div class="t" style="left:238px;top:726px;font-size:11px;color:#111">0.89 sec</div>
<div class="t" style="left:298px;width:200px;text-align:center;top:726px;font-size:10.9px;color:#111">&quot;crosswalks&quot; not found</div>
<div class="t" style="left:599px;top:726px;font-size:10.8px;color:#1a1ae0">ReCaptcha2</div>
<div class="t" style="left:238px;top:830px;font-size:11px;color:#111">0.89 sec</div>
<div class="t" style="left:298px;width:200px;text-align:center;top:830px;font-size:10.9px;color:#111">&quot;crosswalks&quot; not found</div>
<div class="t" style="left:599px;top:830px;font-size:10.8px;color:#1a1ae0">ReCaptcha2</div>
</div>
</body></html>
